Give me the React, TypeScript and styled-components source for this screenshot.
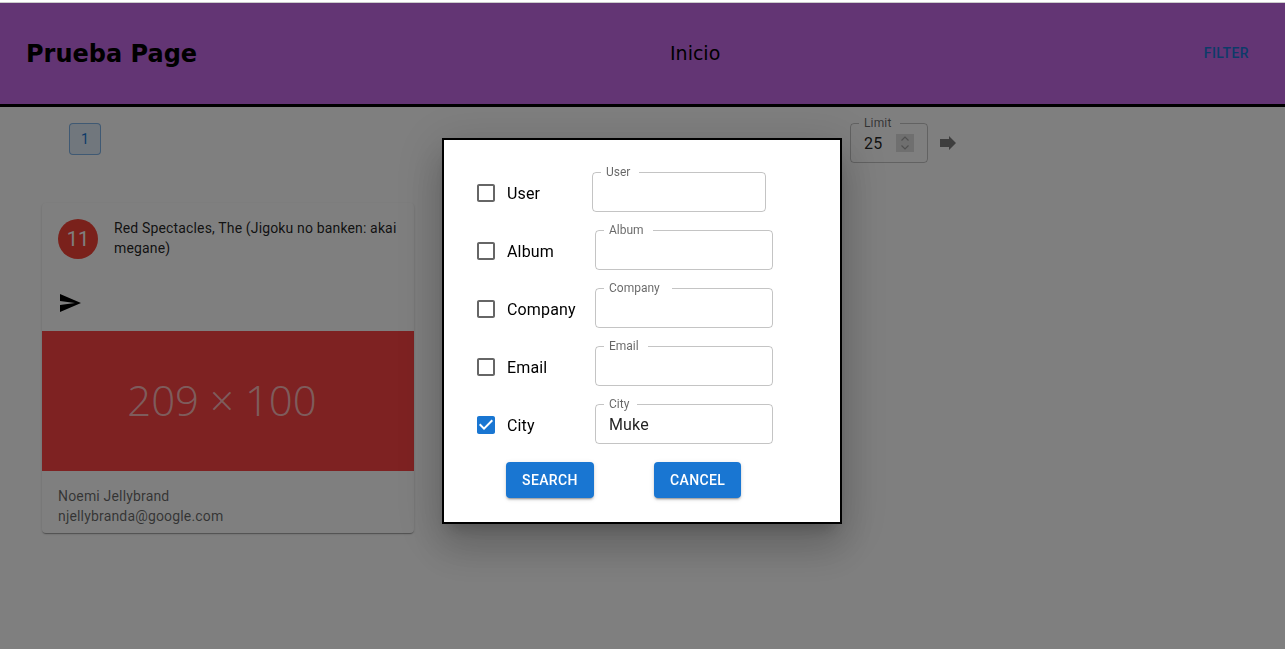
import { useState } from "react";
import styled, { createGlobalStyle } from "styled-components";

/***** Styled ******/
const GlobalStyle = createGlobalStyle`
  html, body {
    margin: 0;
    padding: 0;
    height: 100%;
    background: #fff;
    font-family: Roboto, "Liberation Sans", sans-serif;
    overflow: hidden;
  }
  * {
    box-sizing: border-box;
  }
`;
const Page = styled.div`
  padding-top: 3px;
  height: 649px;
`;
const Header = styled.header`
  height: 104px;
  background: #c66ae8;
  border-bottom: 3px solid #000;
  box-shadow: 0 -1px 0 #ccc;
  display: grid;
  grid-template-columns: 644px 1fr auto;
  align-items: center;
  padding: 0 36px 0 26px;
`;
const Brand = styled.h1`
  margin: 0;
  font-family: "DejaVu Sans", sans-serif;
  font-size: 24px;
  font-weight: 700;
  color: #000;
`;
const NavTitle = styled.span`
  font-family: "DejaVu Sans", sans-serif;
  font-size: 19px;
  color: #000;
  margin-bottom: 2px;
`;
const FilterButton = styled.button`
  border: 0;
  background: none;
  padding: 0;
  margin-bottom: 2px;
  font-family: Roboto, sans-serif;
  font-size: 14px;
  font-weight: 500;
  letter-spacing: 0.4px;
  color: #1976d2;
`;
const Toolbar = styled.div`
  display: flex;
  align-items: flex-start;
  padding: 16px 0 0 69px;
  height: 96px;
`;
const PageButton = styled.button`
  width: 32px;
  height: 32px;
  border: 1px solid rgba(25, 118, 210, 0.5);
  border-radius: 4px;
  background: rgba(25, 118, 210, 0.12);
  color: #1976d2;
  font-family: Roboto, sans-serif;
  font-size: 14px;
  padding: 0;
`;
const LimitGroup = styled.div`
  display: flex;
  align-items: center;
  margin-left: 749px;
  gap: 12px;
`;
const LimitField = styled.div`
  position: relative;
  width: 78px;
  height: 40px;
  display: flex;
  align-items: center;
  justify-content: space-between;
  padding: 0 14px;
  font-size: 16px;
  letter-spacing: 0.15px;
  color: rgba(0, 0, 0, 0.87);
`;
const Spinner = styled.span`
  width: 18px;
  height: 18px;
  background: #dedede;
  display: flex;
  align-items: center;
  justify-content: center;
`;
const Card = styled.article`
  width: 372px;
  margin-left: 42px;
  height: 330px;
  background: #fff;
  border-radius: 4px;
  overflow: hidden;
  box-shadow: 0 2px 1px -1px rgba(0, 0, 0, 0.2), 0 1px 1px 0 rgba(0, 0, 0, 0.14),
    0 1px 3px 0 rgba(0, 0, 0, 0.12);
`;
const CardHeader = styled.div`
  display: flex;
  gap: 16px;
  padding: 16px 16px 0;
  height: 81px;
`;
const Avatar = styled.div`
  flex: none;
  width: 40px;
  height: 40px;
  border-radius: 50%;
  background: #f44336;
  color: #fff;
  font-size: 20px;
  display: flex;
  align-items: center;
  justify-content: center;
`;
const CardTitle = styled.div`
  margin-top: -1px;
  font-size: 14px;
  line-height: 20px;
  letter-spacing: 0.15px;
  color: rgba(0, 0, 0, 0.87);
`;
const CardActions = styled.div`
  height: 47px;
  padding: 7px 16px 0;
  display: flex;
  align-items: flex-start;
`;
const Placeholder = styled.div`
  height: 140px;
  padding: 0 12px 4px 0;
  background: #fc4444;
  color: rgba(255, 255, 255, 0.65);
  font-family: "Open Sans", sans-serif;
  font-weight: 300;
  font-size: 42px;
  display: flex;
  align-items: center;
  justify-content: center;
`;
const CardBody = styled.div`
  padding: 15px 16px 0;
  font-size: 14px;
  line-height: 20px;
  letter-spacing: 0.17px;
  color: rgba(0, 0, 0, 0.6);
`;
const Backdrop = styled.div`
  position: fixed;
  inset: 3px 0 0;
  background: rgba(0, 0, 0, 0.5);
`;
const Modal = styled.form`
  position: fixed;
  left: 442px;
  top: 138px;
  width: 400px;
  height: 386px;
  background: #fff;
  border: 2px solid #000;
  padding: 32px 32px 0;
  box-shadow: 0 11px 15px -7px rgba(0, 0, 0, 0.2), 0 24px 38px 3px rgba(0, 0, 0, 0.14),
    0 9px 46px 8px rgba(0, 0, 0, 0.12);
`;
const FilterRow = styled.div`
  display: flex;
  align-items: center;
  height: 40px;
  margin-bottom: 18px;
`;
const CheckLabel = styled.label<{ $width: number }>`
  display: flex;
  align-items: center;
  width: ${(props) => props.$width}px;
  padding-top: 2px;
  font-size: 16px;
  letter-spacing: 0.15px;
  color: #000;
  gap: 9px;
`;
const CheckIcon = styled.svg<{ $checked: boolean }>`
  width: 24px;
  height: 24px;
  margin-left: -2px;
  fill: ${(props) => (props.$checked ? "#1976d2" : "rgba(0, 0, 0, 0.6)")};
`;
const Field = styled.div<{ $width: number }>`
  position: relative;
  width: ${(props) => props.$width}px;
  height: 40px;
`;
const Outline = styled.fieldset`
  position: absolute;
  inset: -5px 0 0;
  margin: 0;
  padding: 0 8px;
  border: 1px solid rgba(0, 0, 0, 0.23);
  border-radius: 4px;
  pointer-events: none;
`;
const Legend = styled.legend`
  padding: 0 5px;
  font-size: 13.6px;
  line-height: 11px;
  visibility: hidden;
`;
const FloatLabel = styled.label`
  position: absolute;
  left: 14px;
  top: -7px;
  font-size: 12px;
  line-height: 14px;
  color: rgba(0, 0, 0, 0.6);
`;
const TextInput = styled.input`
  width: 100%;
  height: 100%;
  border: 0;
  outline: 0;
  background: none;
  padding: 0 14px;
  font-family: Roboto, sans-serif;
  font-size: 16px;
  letter-spacing: 0.15px;
  color: rgba(0, 0, 0, 0.87);
`;
const Actions = styled.div`
  display: flex;
  padding-left: 30px;
  gap: 60px;
`;
const PrimaryButton = styled.button`
  height: 36px;
  padding: 0 16px;
  border: 0;
  border-radius: 4px;
  background: #1976d2;
  color: #fff;
  font-family: Roboto, sans-serif;
  font-size: 14px;
  font-weight: 500;
  letter-spacing: 0.4px;
  text-transform: uppercase;
  box-shadow: 0 3px 1px -2px rgba(0, 0, 0, 0.2), 0 2px 2px 0 rgba(0, 0, 0, 0.14),
    0 1px 5px 0 rgba(0, 0, 0, 0.12);
`;

/***** Types ******/
interface FilterInterface {
  name: string;
  labelWidth: number;
  fieldWidth: number;
  value: string;
  checked: boolean;
}

const filters: FilterInterface[] = [
  { name: "User", labelWidth: 116, fieldWidth: 174, value: "", checked: false },
  { name: "Album", labelWidth: 119, fieldWidth: 178, value: "", checked: false },
  { name: "Company", labelWidth: 119, fieldWidth: 178, value: "", checked: false },
  { name: "Email", labelWidth: 119, fieldWidth: 178, value: "", checked: false },
  { name: "City", labelWidth: 119, fieldWidth: 178, value: "Muke", checked: true },
];

function FilterField({ filter }: { filter: FilterInterface }) {
  const [value, setValue] = useState(filter.value);
  return (
    <Field $width={filter.fieldWidth}>
      <FloatLabel>{filter.name}</FloatLabel>
      <Outline>
        <Legend>{filter.name}</Legend>
      </Outline>
      <TextInput value={value} onChange={(e) => setValue(e.target.value)} />
    </Field>
  );
}

function App() {
  return (
    <>
      <GlobalStyle />
      <Page>
        <Header>
          <Brand>Prueba Page</Brand>
          <NavTitle>Inicio</NavTitle>
          <FilterButton>FILTER</FilterButton>
        </Header>

        <Toolbar>
          <PageButton>1</PageButton>
          <LimitGroup>
            <LimitField>
              <FloatLabel>Limit</FloatLabel>
              <Outline>
                <Legend>Limit</Legend>
              </Outline>
              25
              <Spinner>
                <svg width="10" height="16" viewBox="0 0 10 16" fill="none" stroke="#a0a0a0" strokeWidth="1.2">
                  <path d="M1.5 5.5 5 2l3.5 3.5M1.5 10.5 5 14l3.5-3.5" />
                </svg>
              </Spinner>
            </LimitField>
            <svg width="16" height="14" viewBox="0 0 16 14" fill="#7c7c7c">
              <path d="M0 3h9V0l7 7-7 7v-3H0z" />
            </svg>
          </LimitGroup>
        </Toolbar>

        <Card>
          <CardHeader>
            <Avatar>11</Avatar>
            <CardTitle>Red Spectacles, The (Jigoku no banken: akai megane)</CardTitle>
          </CardHeader>
          <CardActions>
            <svg width="24" height="24" viewBox="0 0 24 24" fill="#000">
              <path d="M2.01 21 23 12 2.01 3 2 10l15 2-15 2z" />
            </svg>
          </CardActions>
          <Placeholder>209 × 100</Placeholder>
          <CardBody>
            Noemi Jellybrand
            <br />
            njellybranda@google.com
          </CardBody>
        </Card>
      </Page>

      <Backdrop />
      <Modal>
        {filters.map((filter) => (
          <FilterRow key={filter.name}>
            <CheckLabel $width={filter.labelWidth}>
              <CheckIcon $checked={filter.checked} viewBox="0 0 24 24">
                {filter.checked ? (
                  <path d="M19 3H5c-1.11 0-2 .9-2 2v14c0 1.1.89 2 2 2h14c1.11 0 2-.9 2-2V5c0-1.1-.89-2-2-2zm-9 14-5-5 1.41-1.41L10 14.17l7.59-7.59L19 8l-9 9z" />
                ) : (
                  <path d="M19 5v14H5V5h14m0-2H5c-1.1 0-2 .9-2 2v14c0 1.1.9 2 2 2h14c1.1 0 2-.9 2-2V5c0-1.1-.9-2-2-2z" />
                )}
              </CheckIcon>
              {filter.name}
            </CheckLabel>
            <FilterField filter={filter} />
          </FilterRow>
        ))}
        <Actions>
          <PrimaryButton type="button">Search</PrimaryButton>
          <PrimaryButton type="button">Cancel</PrimaryButton>
        </Actions>
      </Modal>
    </>
  );
}

export default App;
